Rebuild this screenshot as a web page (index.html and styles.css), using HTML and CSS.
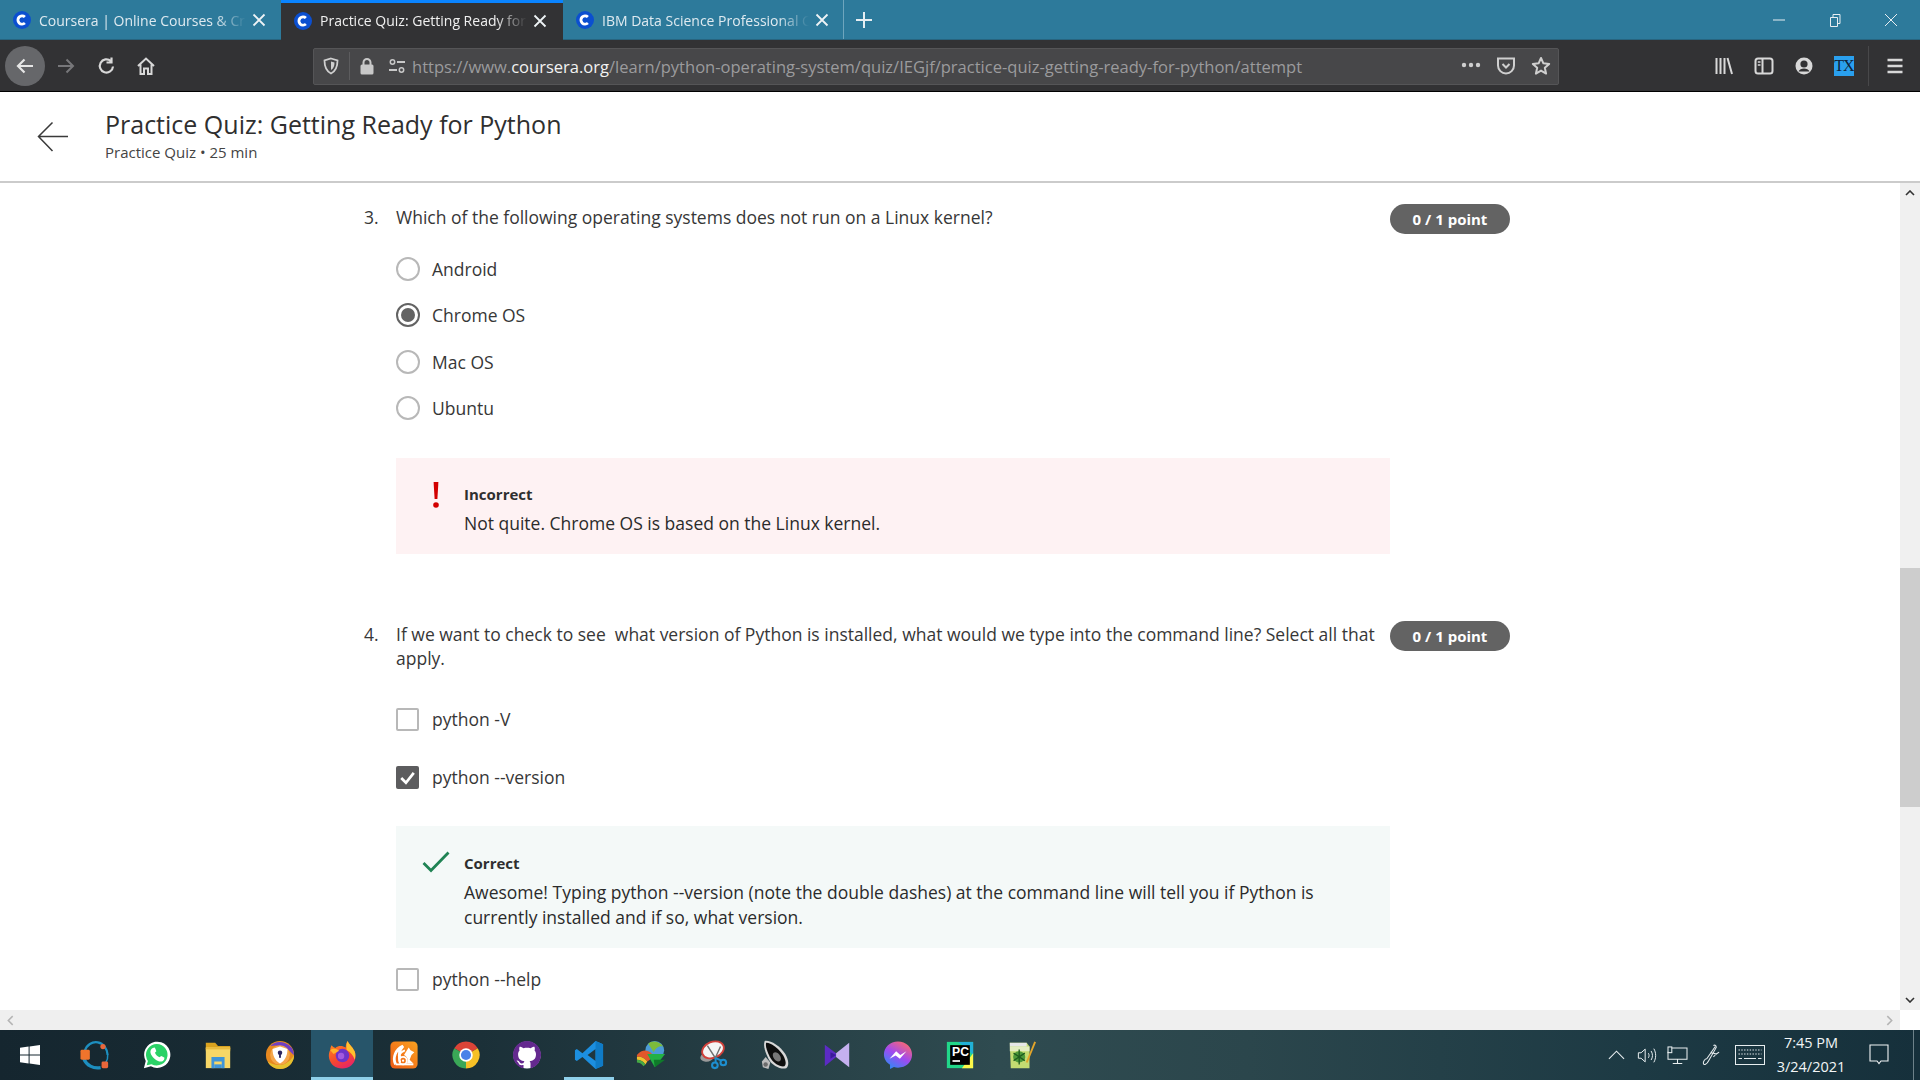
FILE: index.html
```html
<!DOCTYPE html>
<html lang="en">
<head>
<meta charset="utf-8">
<title>Practice Quiz</title>
<link rel="stylesheet" href="styles.css">
</head>
<body>
<svg class="defs" width="0" height="0" aria-hidden="true">
  <symbol id="fav" viewBox="0 0 20 20">
    <circle cx="10" cy="10" r="10" fill="#0b4fd0"/>
    <path d="M13.2 6.6A4.6 4.6 0 1 0 13.2 13.4" fill="none" stroke="#fff" stroke-width="3.2"/>
  </symbol>
  <symbol id="tabx" viewBox="0 0 14 14">
    <path d="M1.5 1.5L12.5 12.5M12.5 1.5L1.5 12.5" stroke="#eef3f6" stroke-width="1.8" fill="none"/>
  </symbol>
</svg>
<div class="app">
  <div class="tabbar">
    <div class="tab">
      <svg class="fav"><use href="#fav"/></svg>
      <span class="tab-title">Coursera | Online Courses &amp; Credentials</span>
      <svg class="tab-x"><use href="#tabx"/></svg>
    </div>
    <div class="tab active">
      <svg class="fav"><use href="#fav"/></svg>
      <span class="tab-title">Practice Quiz: Getting Ready for Python</span>
      <svg class="tab-x"><use href="#tabx"/></svg>
    </div>
    <div class="tab last">
      <svg class="fav"><use href="#fav"/></svg>
      <span class="tab-title">IBM Data Science Professional Certificate</span>
      <svg class="tab-x"><use href="#tabx"/></svg>
    </div>
    <svg class="plus" viewBox="0 0 18 18"><path d="M9 1V17M1 9H17" stroke="#e6eef2" stroke-width="2"/></svg>
    <div class="winctl">
      <svg class="wbtn" viewBox="0 0 14 14"><path d="M1 7H13" stroke="#e8eef2" stroke-width="1"/></svg>
      <svg class="wbtn" viewBox="0 0 14 14"><path d="M2.5 4.5H9.5V13.5H2.5ZM5 4.5V1.5H12V10.5H9.5" stroke="#e8eef2" stroke-width="1" fill="none"/></svg>
      <svg class="wbtn" viewBox="0 0 14 14"><path d="M1 1L13 13M13 1L1 13" stroke="#e8eef2" stroke-width="1" fill="none"/></svg>
    </div>
  </div>

  <div class="navbar">
    <div class="nav-back">
      <svg viewBox="0 0 20 20" class="ic20"><path d="M18 10H3M9.5 3.5L3 10L9.5 16.5" stroke="#e6e6e6" stroke-width="2.2" fill="none"/></svg>
    </div>
    <svg viewBox="0 0 20 20" class="ic20 nav-fwd"><path d="M2 10H17M10.5 3.5L17 10L10.5 16.5" stroke="#77777a" stroke-width="2" fill="none"/></svg>
    <svg viewBox="0 0 20 20" class="ic20 nav-rel"><path d="M16 10.5A6.6 6.6 0 1 1 13.8 5M14.5 1.5V6.5H9.5" stroke="#d8d8d8" stroke-width="2.2" fill="none"/></svg>
    <svg viewBox="0 0 20 20" class="ic20 nav-home"><path d="M2 10L10 2.5L18 10M4.5 8.5V18H8V12.5H12V18H15.5V8.5" stroke="#d8d8d8" stroke-width="2" fill="none"/></svg>
    <div class="urlbar">
      <svg viewBox="0 0 18 18" class="ic18 u-shield"><path d="M9 1.5L15.5 3.5C15.5 10 14 14 9 16.5C4 14 2.5 10 2.5 3.5Z" stroke="#cfcfcf" stroke-width="1.8" fill="none"/><path d="M9 4.5L12.5 5.5C12.5 9 11.5 11.5 9 13Z" fill="#cfcfcf"/></svg>
      <span class="u-sep"></span>
      <svg viewBox="0 0 18 18" class="ic18 u-lock"><path d="M5.5 8V5.5a3.5 3.5 0 0 1 7 0V8" stroke="#c8c8c8" stroke-width="2" fill="none"/><rect x="2.5" y="7.5" width="13" height="10" rx="1.5" fill="#c8c8c8"/></svg>
      <svg viewBox="0 0 18 18" class="ic18 u-perm"><circle cx="4.5" cy="5" r="2.2" stroke="#c8c8c8" stroke-width="1.5" fill="none"/><path d="M9 5H17M1 13H9" stroke="#c8c8c8" stroke-width="2"/><circle cx="13.5" cy="13" r="2.2" stroke="#c8c8c8" stroke-width="1.5" fill="none"/></svg>
      <span class="url"><span class="dim">https://www.</span><span class="bright">coursera.org</span><span class="dim">/learn/python-operating-system/quiz/IEGjf/practice-quiz-getting-ready-for-python/attempt</span></span>
      <svg viewBox="0 0 20 6" class="u-dots"><circle cx="3" cy="3" r="2.2" fill="#cfcfcf"/><circle cx="10" cy="3" r="2.2" fill="#cfcfcf"/><circle cx="17" cy="3" r="2.2" fill="#cfcfcf"/></svg>
      <svg viewBox="0 0 20 20" class="ic20 u-pocket"><path d="M2 2.5H18V9.5A8 8 0 0 1 2 9.5Z" stroke="#cfcfcf" stroke-width="2" fill="none"/><path d="M6.5 8L10 11.5L13.5 8" stroke="#cfcfcf" stroke-width="2" fill="none"/></svg>
      <svg viewBox="0 0 20 20" class="ic20 u-star"><path d="M10 2L12.4 7.3L18.2 7.9L13.8 11.8L15.1 17.6L10 14.6L4.9 17.6L6.2 11.8L1.8 7.9L7.6 7.3Z" stroke="#cfcfcf" stroke-width="2" fill="none" stroke-linejoin="round"/></svg>
    </div>
    <div class="nav-right">
      <svg viewBox="0 0 20 20" class="ic20"><path d="M2.5 2V18M6.5 2V18M10.5 2V18M13.5 2L18 18" stroke="#d8d8d8" stroke-width="2" fill="none"/></svg>
      <svg viewBox="0 0 20 20" class="ic20"><rect x="1.5" y="2.5" width="17" height="15" rx="2.5" stroke="#d8d8d8" stroke-width="2" fill="none"/><path d="M8.5 3V17" stroke="#d8d8d8" stroke-width="2"/><path d="M3.8 6H6.5M3.8 9H6.5" stroke="#d8d8d8" stroke-width="1.5"/></svg>
      <svg viewBox="0 0 20 20" class="ic20"><circle cx="10" cy="10" r="8.5" fill="#d8d8d8"/><circle cx="10" cy="8" r="3.6" fill="#323234"/><path d="M4.5 15.5C6 11.5 14 11.5 15.5 15.5" fill="#323234"/></svg>
      <div class="tx-badge"><span>TX</span></div>
      <span class="nav-sep"></span>
      <svg viewBox="0 0 20 20" class="ic20 nav-menu"><path d="M2.5 4H17.5M2.5 10H17.5M2.5 16H17.5" stroke="#d8d8d8" stroke-width="2.4"/></svg>
    </div>
  </div>

  <header class="page-head">
    <svg viewBox="0 0 32 32" class="head-back"><path d="M31 15.5H2M15.5 1.5L1.5 15.5L15.5 30" stroke="#3a3a3a" stroke-width="1.5" fill="none"/></svg>
    <div class="head-text">
      <h1>Practice Quiz: Getting Ready for Python</h1>
      <p>Practice Quiz • 25 min</p>
    </div>
  </header>

  <div class="viewport">
    <main class="content">
      <section class="q q3">
        <div class="q-head">
          <span class="q-num">3.</span>
          <span class="q-text">Which of the following operating systems does not run on a Linux kernel?</span>
          <span class="pill">0 / 1 point</span>
        </div>
        <div class="options radios">
          <div class="opt"><span class="radio"></span><span>Android</span></div>
          <div class="opt"><span class="radio on"></span><span>Chrome OS</span></div>
          <div class="opt"><span class="radio"></span><span>Mac OS</span></div>
          <div class="opt"><span class="radio"></span><span>Ubuntu</span></div>
        </div>
        <div class="fb bad">
          <div class="fb-ico">
            <svg viewBox="0 0 12 28" class="bang"><path d="M3.6 1H8.4L7.4 18H4.6Z" fill="#d30000"/><circle cx="6" cy="24" r="2.8" fill="#d30000"/></svg>
          </div>
          <div>
            <div class="fb-label">Incorrect</div>
            <div class="fb-text">Not quite. Chrome OS is based on the Linux kernel.</div>
          </div>
        </div>
      </section>

      <section class="q q4">
        <div class="q-head">
          <span class="q-num">4.</span>
          <span class="q-text">If we want to check to see&nbsp; what version of Python is installed, what would we type into the command line? Select all that apply.</span>
          <span class="pill">0 / 1 point</span>
        </div>
        <div class="options checks">
          <div class="opt tall"><span class="check"></span><span>python -V</span></div>
          <div class="opt tall"><span class="check on"><svg viewBox="0 0 22 22"><path d="M5 11.5L9.5 16L17 6.5" stroke="#fff" stroke-width="2.6" fill="none"/></svg></span><span>python --version</span></div>
        </div>
        <div class="fb good">
          <div class="fb-ico">
            <svg viewBox="0 0 28 22" class="tick"><path d="M1.5 12L9 19.5L26.5 1.5" stroke="#1f8354" stroke-width="2.8" fill="none"/></svg>
          </div>
          <div>
            <div class="fb-label">Correct</div>
            <div class="fb-text">Awesome! Typing python --version (note the double dashes) at the command line will tell you if Python is currently installed and if so, what version.</div>
          </div>
        </div>
        <div class="opt tall after"><span class="check"></span><span>python --help</span></div>
      </section>
    </main>
    <div class="vscroll">
      <svg viewBox="0 0 10 6" class="sarrow"><path d="M1 5L5 1L9 5" stroke="#333" stroke-width="1.6" fill="none"/></svg>
      <div class="vtrack"><div class="vthumb"></div></div>
      <svg viewBox="0 0 10 6" class="sarrow"><path d="M1 1L5 5L9 1" stroke="#333" stroke-width="1.6" fill="none"/></svg>
    </div>
  </div>
  <div class="hscroll">
    <svg viewBox="0 0 6 10" class="harrow"><path d="M5 1L1 5L5 9" stroke="#b4b4b4" stroke-width="1.4" fill="none"/></svg>
    <svg viewBox="0 0 6 10" class="harrow"><path d="M1 1L5 5L1 9" stroke="#b4b4b4" stroke-width="1.4" fill="none"/></svg>
  </div>

  <footer class="taskbar">
    <div class="start">
      <svg viewBox="0 0 20 20" class="winlogo"><path d="M0 2.8L8.6 1.6V9.4H0ZM9.6 1.5L20 0V9.4H9.6ZM0 10.4H8.6V18.4L0 17.2ZM9.6 10.4H20V20L9.6 18.5Z" fill="#fff"/></svg>
    </div>
    <div class="ti"><svg viewBox="0 0 32 32"><path d="M5 12C7 5 13 1.5 19 2.5C25 3.5 29 9 29.5 16" stroke="#1d8fc0" stroke-width="2.4" fill="none"/><path d="M4 20C7 27 14 31 22 29.5" stroke="#1d8fc0" stroke-width="3.4" fill="none"/><path d="M29.5 16C29.8 19 29 22 27.5 24" stroke="#1d8fc0" stroke-width="1.6" fill="none"/><rect x="0.5" y="10.5" width="10" height="10.5" rx="1.5" fill="#f0742c"/><circle cx="24.5" cy="7" r="2.8" fill="#e8663a"/><rect x="23" y="23" width="7" height="7" rx="1.5" fill="#e8663a"/></svg></div>
    <div class="ti"><svg viewBox="0 0 32 32"><path d="M2 30L4 22.5A14 14 0 1 1 9.5 28Z" fill="#fff"/><path d="M5 27L6.3 22.3A11.5 11.5 0 1 1 10.2 25.8Z" fill="#2ad267"/><path d="M11.5 8.5L13.5 8C14.5 9.5 15 11 15.3 12L13.8 13.6C14.8 16 16.3 17.5 18.8 18.5L20.4 17C21.6 17.5 23 18.2 24 19L23.5 21C22 23.3 19.5 23.5 16.5 22C12.5 20 9.5 16.5 9 13C8.8 11 9.8 9.5 11.5 8.5Z" fill="#fff"/></svg></div>
    <div class="ti"><svg viewBox="0 0 32 32"><path d="M3 3H13L16 6.5H29V12H3Z" fill="#d9a21f"/><rect x="3" y="8" width="26" height="22" fill="#f7d767"/><rect x="3" y="8" width="26" height="2" fill="#e9bb3f"/><path d="M9 18H23V30H20V23H12V30H9Z" fill="#3f95d8"/><rect x="12" y="26" width="8" height="4" fill="#3f95d8"/></svg></div>
    <div class="ti"><svg viewBox="0 0 32 32"><circle cx="16" cy="16" r="15" fill="#e8891f"/><path d="M5.5 6.5A15 15 0 0 1 31 16C29 15 27 12 24 9.5C19 6 12 5 5.5 6.5Z" fill="#6f3fc4"/><path d="M31 16A15 15 0 0 1 16 31C10 31 5 27.5 3 23C8 27 16 28 22 25C26 23 28.5 20 31 16Z" fill="#e5c12f"/><circle cx="16" cy="16" r="10.5" fill="#f5a64a"/><path d="M16 7L24 9.5C24 16 21.5 22 16 25C10.5 22 8 16 8 9.5Z" fill="#fff"/><circle cx="16" cy="13.5" r="2.4" fill="#2b2560"/><rect x="15" y="14" width="2" height="5" fill="#2b2560"/></svg></div>
    <div class="ti active"><svg viewBox="0 0 32 32"><defs><linearGradient id="ffx" x1="0.2" y1="0" x2="0.7" y2="1"><stop offset="0" stop-color="#ff8a1e"/><stop offset="0.6" stop-color="#f5472f"/><stop offset="1" stop-color="#e5216c"/></linearGradient></defs><path d="M22 1C23 4 27 7 29.5 12C31.5 17 30.5 23 26 27C21 31.5 12 31.5 7 27.5C2 23.5 0.5 16 3.5 10.5C3.5 8.5 4 7 5 5.5C6 7 7.5 8 9 8.5C12 5.5 17 6 20 8C20 5 20.5 3 22 1Z" fill="url(#ffx)"/><path d="M22 1C23 4 27 7 29.5 12C30.5 15 30.5 18 29.5 21C28 16 25 13 21 11C20.5 7 20.5 4 22 1Z" fill="#ffc12e"/><circle cx="16.5" cy="16.5" r="7.2" fill="#6e34c9"/><circle cx="15" cy="17" r="3.4" fill="#a25ae0"/><path d="M3.5 11C6 8.5 10 9 13 11.5L7 15Z" fill="#ffb22a"/></svg></div>
    <div class="ti"><svg viewBox="0 0 32 32"><defs><linearGradient id="ucb" x1="0" y1="1" x2="1" y2="0"><stop offset="0" stop-color="#ee5a16"/><stop offset="1" stop-color="#fba21f"/></linearGradient></defs><rect x="1.5" y="1.5" width="29" height="29" rx="5" fill="url(#ucb)"/><path d="M7 26C3.5 19 7 10 15 6.5C11 11 10 16 12 20" stroke="#fff" stroke-width="3" fill="none"/><path d="M12 24C9 18 11 13 17 11" stroke="#fff" stroke-width="2" fill="none"/><circle cx="15" cy="22" r="4" stroke="#fff" stroke-width="2" fill="none"/><circle cx="15" cy="22" r="1.2" fill="#fff"/><path d="M16 16L21 8L23 11L27 13L24 16L22 21L26 25H19C21 22 20 18 16 16Z" fill="#fff"/><path d="M7 26H26" stroke="#fff" stroke-width="2"/></svg></div>
    <div class="ti"><svg viewBox="0 0 32 32"><path d="M16 16L3.44 8.75A14.5 14.5 0 0 1 28.56 8.75Z" fill="#db4437"/><path d="M16 16L3.44 8.75A14.5 14.5 0 0 0 16 30.5Z" fill="#3aa757"/><path d="M16 16L16 30.5A14.5 14.5 0 0 0 28.56 8.75Z" fill="#f6c026"/><circle cx="16" cy="16" r="7.2" fill="#fff"/><circle cx="16" cy="16" r="5.4" fill="#4a82e8"/></svg></div>
    <div class="ti"><svg viewBox="0 0 32 32"><circle cx="16" cy="16" r="14.5" fill="#fff"/><g transform="translate(1 1) scale(1.875)"><path fill="#64298f" d="M8 0C3.58 0 0 3.58 0 8c0 3.54 2.29 6.53 5.47 7.59.4.07.55-.17.55-.38 0-.19-.01-.82-.01-1.49-2.01.37-2.53-.49-2.69-.94-.09-.23-.48-.94-.82-1.13-.28-.15-.68-.52-.01-.53.63-.01 1.08.58 1.23.82.72 1.21 1.87.87 2.33.66.07-.52.28-.87.51-1.07-1.78-.2-3.64-.89-3.64-3.95 0-.87.31-1.59.82-2.15-.08-.2-.36-1.02.08-2.12 0 0 .67-.21 2.2.82.64-.18 1.32-.27 2-.27.68 0 1.36.09 2 .27 1.53-1.04 2.2-.82 2.2-.82.44 1.1.16 1.92.08 2.12.51.56.82 1.27.82 2.15 0 3.07-1.87 3.75-3.65 3.95.29.25.54.73.54 1.48 0 1.07-.01 1.93-.01 2.2 0 .21.15.46.55.38A8.013 8.013 0 0016 8c0-4.42-3.58-8-8-8z"/></g></svg></div>
    <div class="ti mark"><svg viewBox="0 0 32 32"><path d="M23 1L31 4.5V27.5L23 31L9 18L3 22.5L1 21V11L3 9.5L9 14ZM23 9.5L14.5 16L23 22.5Z" fill="#1c8fe0"/><path d="M23 1L31 4.5V27.5L23 31Z" fill="#0f7bc6"/></svg></div>
    <div class="ti"><svg viewBox="0 0 32 32"><circle cx="20" cy="11" r="10" fill="#4c9bd6"/><path d="M13 4C17 0 25 1 29 7C25 6 21 8 19 13C17 10 15 7 13 4Z" fill="#7dbb3c"/><path d="M1 16C7 9 15 10 19 18L12 23C9 19 5 17 1 18Z" fill="#e2572b"/><path d="M1 18C5 17 9 19 12 23L10 26C7 22 4 21 1 21Z" fill="#f0c22f"/><path d="M1 21C4 21 7 22 10 26L8 28C6 25 3 24 1 24Z" fill="#46a944"/><path d="M12 15H31L20 29Z" fill="#23b144"/><path d="M19 21H31L20 29Z" fill="#0f7a2a"/></svg></div>
    <div class="ti"><svg viewBox="0 0 32 32"><path d="M5 15C1 18 2 22 7 23C11 24 15 22 17 19Z" fill="#9a9a9a"/><ellipse cx="16" cy="10.5" rx="12" ry="8.5" transform="rotate(-22 16 10.5)" fill="#f5f5f5" stroke="#d0403a" stroke-width="2"/><path d="M10 6L19 20M24 7L18 20" stroke="#707070" stroke-width="1.5"/><circle cx="18" cy="27" r="3" stroke="#1d8fd0" stroke-width="2.2" fill="none"/><circle cx="27" cy="24" r="3" stroke="#1d8fd0" stroke-width="2.2" fill="none"/><path d="M19 24L18.5 19M25 22L18.5 19" stroke="#1d8fd0" stroke-width="2"/></svg></div>
    <div class="ti"><svg viewBox="0 0 32 32"><path d="M5 1C11 0 21 6 27 15C31 22 31 28 28 30C23 32 13 28 9 20C6 14 3 6 5 1Z" fill="#d8d8d8"/><path d="M6.5 3C11 2.5 19 8 24.5 16C28 22 28 26.5 26 28C22 29 14 25 10.5 18C8 13 5.5 7 6.5 3Z" fill="#0e0e0e"/><ellipse cx="18" cy="18" rx="3.5" ry="5.5" transform="rotate(-38 18 18)" fill="#777"/><path d="M6 18L11 24L9 31L3 29L2 23Z" fill="#bdbdbd"/><circle cx="6" cy="26" r="2.4" fill="#6b6b6b"/></svg></div>
    <div class="ti"><svg viewBox="0 0 32 32"><path d="M3 5L15 14V18L3 28Z" fill="#5c2bc4"/><path d="M29 3V29L15 18V14Z" fill="#c5b0ef"/><path d="M9 13L15 16L9 20Z" fill="#3a1a9a"/></svg></div>
    <div class="ti"><svg viewBox="0 0 32 32"><defs><linearGradient id="msg" x1="0.2" y1="1" x2="0.8" y2="0"><stop offset="0" stop-color="#2a8cf5"/><stop offset="0.5" stop-color="#a04af0"/><stop offset="1" stop-color="#ff6a6a"/></linearGradient></defs><path d="M16 1.5C24.5 1.5 31 7.5 31 15.5S24.5 29.5 16 29.5C14.5 29.5 13 29.3 11.7 28.9L7.5 31V26.5C3.5 24 1 20 1 15.5C1 7.5 7.5 1.5 16 1.5Z" fill="url(#msg)"/><path d="M7 20L14 12L18.5 16L25 12L18 20L13.5 16.5Z" fill="#fff"/></svg></div>
    <div class="ti"><svg viewBox="0 0 32 32"><path d="M2 2H30V30H2Z" fill="#21d789"/><path d="M14 2H30V16L24 10Z" fill="#21b0d7"/><path d="M30 14V30H18Z" fill="#fcf84a"/><rect x="5.5" y="5.5" width="21" height="21" fill="#000"/><text x="7.5" y="17.5" class="pc-text">PC</text><rect x="8" y="21.5" width="8" height="1.8" fill="#fff"/></svg></div>
    <div class="ti"><svg viewBox="0 0 32 32"><path d="M3 3H21L24 7V30H4Z" fill="#c4dc72"/><path d="M3 3H21V7H3Z" fill="#e7e7e7"/><path d="M3 7H24V12H3Z" fill="#e4edc0"/><ellipse cx="13" cy="18" rx="6.5" ry="6" fill="#4e9a3a"/><path d="M7 14L19 22M7 22L19 14M13 10V26" stroke="#1f5c1f" stroke-width="1.4"/><path d="M30 2L21 24" stroke="#e3a52a" stroke-width="2"/></svg></div>

    <div class="tray">
      <svg viewBox="0 0 18 10" class="t-chev"><path d="M1 9L9 1L17 9" stroke="#e8eef0" stroke-width="1.2" fill="none"/></svg>
      <svg viewBox="0 0 22 18" class="t-vol"><path d="M1.5 6H4.5L9 2V16L4.5 12H1.5ZM12.5 6.5C13.5 8 13.5 10 12.5 11.5M15.5 4C17.5 7 17.5 11 15.5 14M18.5 1.5C21.2 6 21.2 12 18.5 16.5" stroke="#e8eef0" stroke-width="1.1" fill="none"/></svg>
      <svg viewBox="0 0 22 20" class="t-net"><path d="M5 2H21V14H1V6M11 14V18M6 18.5H16" stroke="#e8eef0" stroke-width="1.1" fill="none"/><rect x="1" y="1" width="4" height="6" stroke="#e8eef0" stroke-width="1.1" fill="none"/></svg>
      <svg viewBox="0 0 20 24" class="t-pen"><path d="M12 2C14 1 15 2 15 4L7 18C5 22 2 23 1.5 21C1 19 3 16 5 16L14 3M9 9L15 11L18 9M14 12L12 14" stroke="#e8eef0" stroke-width="1.1" fill="none"/></svg>
      <svg viewBox="0 0 30 20" class="t-kbd"><rect x="0.5" y="0.5" width="29" height="19" stroke="#e8eef0" fill="none"/><path d="M3.5 5H26.5M3.5 9H26.5" stroke="#e8eef0" stroke-dasharray="1.4 1.4"/><path d="M3.5 13.5H7M9 13.5H21M23 13.5H26.5" stroke="#e8eef0"/></svg>
      <div class="clock"><span>7:45 PM</span><span>3/24/2021</span></div>
      <svg viewBox="0 0 20 22" class="t-note"><path d="M1 1H19V17H12L10 19.5L8 17H1Z" stroke="#f2f5f6" stroke-width="1.1" fill="none"/></svg>
      <span class="t-edge"></span>
    </div>
  </footer>
</div>
</body>
</html>
```

FILE: styles.css
```css
* { box-sizing: border-box; }
html, body { margin: 0; padding: 0; height: 100%; overflow: hidden; background: #fff; }
body { font-family: "Open Sans", "Noto Sans", sans-serif; color: #333; }
.defs { display: block; height: 0; }
.app { width: 1920px; height: 1080px; display: flex; flex-direction: column; overflow: hidden; }

/* tab strip */
.tabbar { height: 40px; background: #2d7a9b; display: flex; align-items: stretch; flex: none; border-bottom: 1px solid #27647f; }
.tab { width: 281px; display: flex; align-items: center; padding: 1px 12px 0 13px; color: #dfeaf0; font-size: 14px; }
.tab.active { background: #323234; color: #f0f0f0; border-top: 3px solid #0a84ff; padding-top: 0; padding-bottom: 2px; margin-bottom: -1px; width: 282px; }
.tab.last { border-right: 1px solid #6ea5bd; width: 281px; }
.fav { width: 18px; height: 18px; flex: none; }
.tab-title { width: 207px; margin-left: 8px; flex: none; overflow: hidden; white-space: nowrap; -webkit-mask-image: linear-gradient(90deg, #000 85%, transparent 100%); mask-image: linear-gradient(90deg, #000 85%, transparent 100%); }
.tab-x { width: 14px; height: 14px; flex: none; margin-left: 6px; }
.plus { width: 18px; height: 18px; align-self: center; margin-left: 11px; flex: none; }
.winctl { margin-left: auto; display: flex; align-items: center; gap: 42px; padding-right: 22px; }
.wbtn { width: 14px; height: 14px; }

/* nav bar */
.navbar { height: 52px; background: #323234; border-bottom: 1px solid #000; display: flex; align-items: center; flex: none; padding-left: 5px; }
.ic20 { width: 20px; height: 20px; flex: none; }
.ic18 { width: 18px; height: 18px; flex: none; }
.nav-back { width: 40px; height: 40px; border-radius: 50%; background: #66676a; display: flex; align-items: center; justify-content: center; flex: none; }
.nav-fwd { margin-left: 11px; }
.nav-rel { margin-left: 21px; }
.nav-home { margin-left: 19px; }
.urlbar { margin-left: 157px; width: 1246px; height: 37px; margin-top: 1px; background: #474749; border: 1px solid #555557; border-radius: 2px; display: flex; align-items: center; }
.u-shield { margin-left: 8px; }
.u-sep { width: 1px; height: 28px; background: #5c5c5e; margin-left: 9px; }
.u-lock { margin-left: 8px; }
.u-perm { margin-left: 12px; }
.url { margin-left: 6px; margin-top: 1px; font-size: 16.55px; white-space: nowrap; width: 1040px; flex: none; }
.dim { color: #9b9b9d; }
.bright { color: #f2f2f2; }
.u-dots { width: 20px; height: 6px; flex: none; margin-left: 9px; margin-top: -2px; }
.u-pocket { margin-left: 15px; margin-top: -1px; }
.u-star { margin-left: 15px; margin-top: -1px; }
.nav-right { display: flex; align-items: center; margin-left: 155px; }
.nav-right > svg + svg { margin-left: 20px; }
.tx-badge { width: 20px; height: 20px; margin-left: 20px; background: #2aa0ee; color: #10233a; font-family: "Liberation Serif", serif; font-size: 16px; line-height: 20px; text-align: center; overflow: hidden; }
.tx-badge span { letter-spacing: -1px; }
.nav-sep { width: 1px; height: 40px; background: #48484a; margin-left: 14px; }
.nav-right .nav-menu { margin-left: 16px; }

/* page header */
.page-head { height: 91px; flex: none; background: #fff; border-bottom: 2px solid #cbcbcb; display: flex; align-items: center; padding-left: 37px; }
.head-back { width: 32px; height: 32px; flex: none; margin-top: 1px; }
.head-text { margin-left: 36px; margin-top: -1px; }
h1 { margin: 0; font-size: 25px; font-weight: 400; line-height: 32px; color: #2f2f2f; }
.head-text p { margin: 1px 0 0; font-size: 15px; line-height: 23px; color: #444; }

/* quiz viewport */
.viewport { flex: 1; min-height: 0; display: flex; }
.content { flex: 1; min-width: 0; overflow: hidden; padding: 22px 0 0 364px; font-size: 17.5px; color: #373737; }
.q { width: 1146px; }
.q-head { display: flex; align-items: flex-start; line-height: 24px; }
.q-num { width: 32px; flex: none; }
.q-text { width: 994px; flex: none; padding-right: 8px; }
.pill { width: 120px; height: 30px; flex: none; margin-top: -1px; border-radius: 15px; background: #636363; color: #fff; font-size: 15px; font-weight: 700; line-height: 31px; text-align: center; }
.options { margin-left: 32px; }
.radios { margin-top: 12px; }
.opt { display: flex; align-items: center; height: 46.33px; gap: 12px; }
.tall { height: 58px; gap: 13px; }
.radio { width: 24px; height: 24px; border-radius: 50%; border: 2px solid #b8b8b8; flex: none; background: #fff; }
.radio.on { border-color: #636363; display: flex; align-items: center; justify-content: center; }
.radio.on::after { content: ""; width: 14px; height: 14px; border-radius: 50%; background: #636363; }
.check { width: 23px; height: 23px; border-radius: 2px; border: 2px solid #b8b8b8; flex: none; background: #fff; }
.check.on { border: 0; background: #5c5c5e; }
.check.on svg { display: block; width: 23px; height: 23px; }

.fb { margin-left: 32px; width: 994px; display: flex; padding: 26px 56px 0 0; }
.fb-ico { width: 68px; flex: none; display: flex; justify-content: center; padding-left: 12px; }
.fb-label { font-size: 15px; font-weight: 700; line-height: 20px; color: #2f2f2f; }
.fb-text { font-size: 17.5px; line-height: 25px; margin-top: 7px; color: #2b2b2b; }
.bad { background: #fef2f3; height: 96px; margin-top: 27px; }
.good { background: #f4f9f8; height: 122px; margin-top: 20px; padding-top: 27px; }
.bang { width: 12px; height: 28px; margin-top: -3px; }
.tick { width: 28px; height: 22px; margin-top: -2px; }
.q4 { margin-top: 67.5px; }
.checks { margin-top: 20.5px; }
.after { margin: 2px 0 0 32px; }

/* scrollbars */
.vscroll { width: 20px; flex: none; background: #f0f0f0; display: flex; flex-direction: column; align-items: center; padding: 7px 0; }
.sarrow { width: 10px; height: 6px; flex: none; }
.vtrack { flex: 1; width: 100%; display: flex; flex-direction: column; padding-top: 372px; }
.vthumb { height: 239px; background: #cdcdcd; }
.hscroll { height: 20px; flex: none; width: 1900px; background: #efefef; display: flex; align-items: center; justify-content: space-between; padding: 0 7px; }
.harrow { width: 7px; height: 11px; }

/* taskbar */
.taskbar { height: 50px; flex: none; display: flex; align-items: stretch; background: linear-gradient(90deg, #15262f 0%, #1b3038 25%, #2f4b50 52%, #2b464c 65%, #1d3a44 85%, #16303b 100%); color: #f2f5f6; }
.start { width: 64px; display: flex; align-items: center; justify-content: flex-start; padding-left: 20px; flex: none; }
.winlogo { width: 20px; height: 20px; }
.ti { width: 61.8px; flex: none; display: flex; align-items: center; justify-content: center; border-bottom: 3px solid transparent; padding-top: 3px; }
.ti svg { width: 30px; height: 30px; }
.ti.active { background: #27556a; border-bottom-color: #8fd0ea; }
.ti.mark { border-bottom-color: #8fd0ea; margin: 0 6px; width: 50px; }
.pc-text { font-family: "Liberation Sans", sans-serif; font-size: 13px; font-weight: 700; fill: #fff; }
.tray { margin-left: auto; display: flex; align-items: center; position: relative; padding-right: 6px; }
.t-chev { width: 17px; height: 10px; }
.t-vol { width: 20px; height: 17px; margin-left: 12px; }
.t-net { width: 21px; height: 19px; margin-left: 10px; }
.t-pen { width: 19px; height: 24px; margin-left: 14px; }
.t-kbd { width: 30px; height: 20px; margin-left: 14px; }
.clock { width: 88px; margin-left: 2px; display: flex; flex-direction: column; align-items: center; font-size: 14.5px; line-height: 24px; }
.t-note { width: 20px; height: 22px; margin-left: 14px; }
.t-edge { width: 1px; height: 50px; background: #6d8189; margin-left: 24px; }
```
